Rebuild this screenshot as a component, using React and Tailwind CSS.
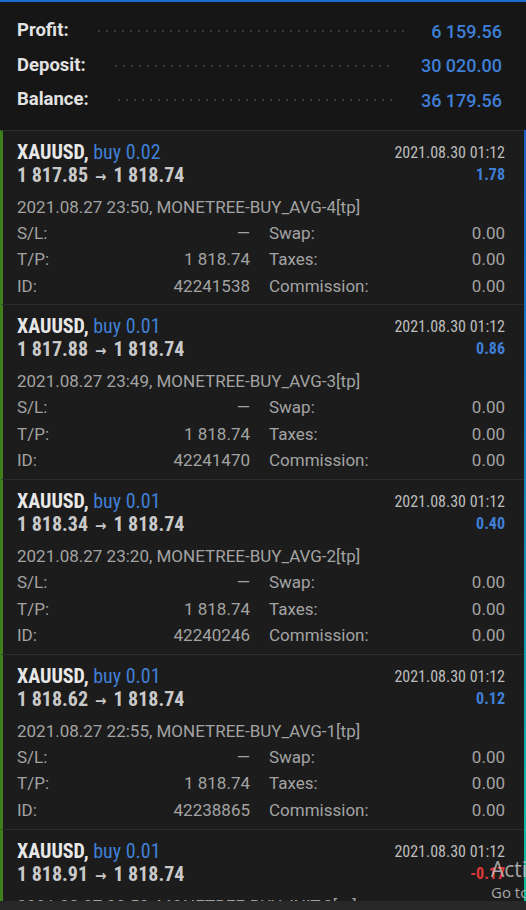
import React from "react";

const COND = { fontFamily: '"Roboto Condensed", "Liberation Sans Narrow", "DejaVu Sans Condensed", Roboto, sans-serif' };

const trades = [
  { lot: "0.02", open: "1 817.85", close: "1 818.74", profit: "1.78", neg: false, time: "2021.08.27 23:50", comment: "MONETREE-BUY_AVG-4[tp]", id: "42241538" },
  { lot: "0.01", open: "1 817.88", close: "1 818.74", profit: "0.86", neg: false, time: "2021.08.27 23:49", comment: "MONETREE-BUY_AVG-3[tp]", id: "42241470" },
  { lot: "0.01", open: "1 818.34", close: "1 818.74", profit: "0.40", neg: false, time: "2021.08.27 23:20", comment: "MONETREE-BUY_AVG-2[tp]", id: "42240246" },
  { lot: "0.01", open: "1 818.62", close: "1 818.74", profit: "0.12", neg: false, time: "2021.08.27 22:55", comment: "MONETREE-BUY_AVG-1[tp]", id: "42238865" },
  { lot: "0.01", open: "1 818.91", close: "1 818.74", profit: "-0.17", neg: true, time: "2021.08.27 22:50", comment: "MONETREE-BUY_INIT-0[tp]", id: "42238801" },
];

function SummaryRow({ label, value }) {
  return (
    <div className="flex h-[34.5px] items-center">
      <span className="text-[18.5px] font-bold text-[#e2e2e2]">{label}</span>
      <span className="mx-[26px] h-[4px] flex-1 bg-[radial-gradient(circle,#3a3a3a_1px,transparent_1.3px)] bg-[length:8px_4px]" />
      <span className="text-[18px] font-medium text-[#3f7fd6]">{value}</span>
    </div>
  );
}

function Trade({ t }) {
  return (
    <div className="border-t border-[#2c2c2c] border-l-[3px] border-l-[#3f7f1c] pl-[14px] pr-[21px] pt-[10px] pb-[5.25px]">
      <div className="flex h-[22px] items-center justify-between" style={COND}>
        <span className="text-[20px] font-bold leading-none text-[#e8e8e8]">
          XAUUSD, <span className="font-normal text-[#3f7fd6]">buy {t.lot}</span>
        </span>
        <span className="mt-[2px] text-[16px] leading-none text-[#bdbdbd]">2021.08.30 01:12</span>
      </div>
      <div className="flex h-[24px] items-center justify-between" style={COND}>
        <span className="text-[20px] font-bold leading-none text-[#c9c9c9]">
          {t.open}<span className="mx-[7px] text-[15px]">→</span>{t.close}
        </span>
        <span className={"text-[16px] font-bold leading-none " + (t.neg ? "text-[#e0393a]" : "text-[#3f7fd6]")}>{t.profit}</span>
      </div>
      <div className="mt-[7px] text-[17px] leading-[26px] text-[#a3a3a3]">
        {t.time}, {t.comment}
      </div>
      <div className="grid grid-cols-[233px_1fr] gap-x-[19px] text-[17px] leading-[26.5px] text-[#a3a3a3]">
        <div className="flex justify-between"><span>S/L:</span><span>—</span></div>
        <div className="flex justify-between"><span>Swap:</span><span>0.00</span></div>
        <div className="flex justify-between"><span>T/P:</span><span>1 818.74</span></div>
        <div className="flex justify-between"><span>Taxes:</span><span>0.00</span></div>
        <div className="flex justify-between"><span>ID:</span><span>{t.id}</span></div>
        <div className="flex justify-between"><span>Commission:</span><span>0.00</span></div>
      </div>
    </div>
  );
}

export default function App() {
  return (
    <div className="relative flex h-[910px] w-[526px] flex-col overflow-hidden bg-[#1c1c1c]" style={{ fontFamily: "Roboto, 'Liberation Sans', sans-serif" }}>
      <div className="h-[2px] bg-[#1e6cd0]" />
      <div className="bg-[#161616] pl-[17px] pr-[24px] pt-[12px] pb-[12px]">
        <SummaryRow label="Profit:" value="6 159.56" />
        <SummaryRow label="Deposit:" value="30 020.00" />
        <SummaryRow label="Balance:" value="36 179.56" />
      </div>
      <div className="relative flex-1 overflow-hidden">
        {trades.map((t, i) => (
          <Trade key={i} t={t} />
        ))}
        <div className="absolute right-0 top-0 h-full w-[2px] bg-gradient-to-b from-[#1d5fc4] via-[#1a86b8] to-[#14c09a]" />
      </div>
      <div className="h-[9px] bg-[#282828]" />
      <div className="pointer-events-none absolute left-[491px] top-[857px] whitespace-nowrap text-[#c8c8c8] opacity-80" style={{ fontFamily: "'Open Sans', 'Noto Sans', sans-serif" }}>
        <div className="text-[21px] leading-[25px]">Activate Windows</div>
        <div className="text-[15px] leading-[20px]">Go to Settings to activate Windows.</div>
      </div>
    </div>
  );
}
